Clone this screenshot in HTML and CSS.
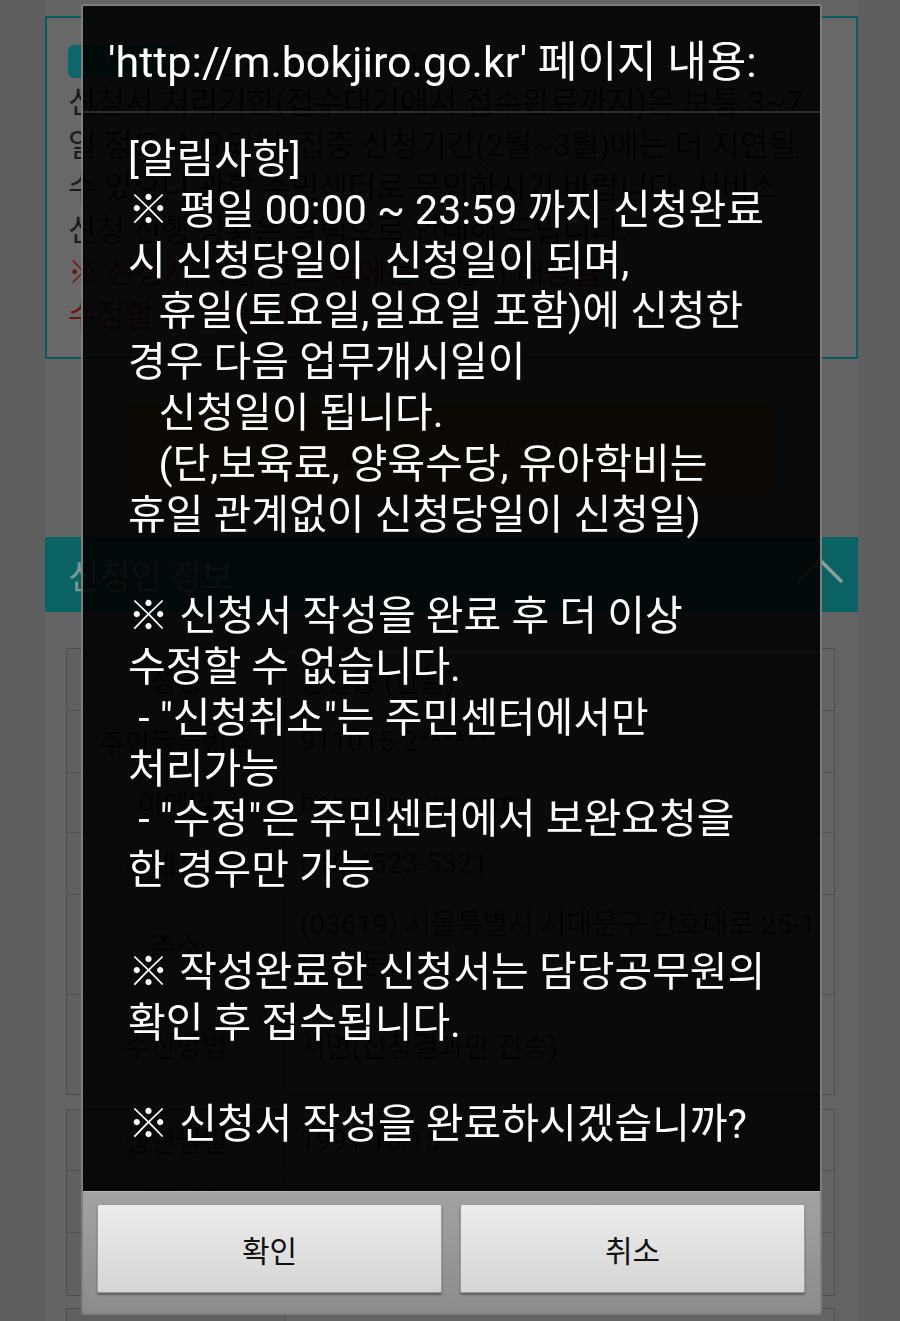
FILE: index.html
```html
<!DOCTYPE html>
<html lang="ko">
<head>
<meta charset="utf-8">
<title>복지로 신청서 작성</title>
<link rel="stylesheet" href="styles.css">
</head>
<body>
<div class="page">
  <section class="notice">
    <div class="notice-head"><span class="badge">안내</span><span class="notice-title">신청서 처리기한 안내</span></div>
    <p class="notice-text">신청서 처리기한(접수대기에서 접수완료까지)은 보통 3~7<br>일 정도 소요되며, 집중 신청기간(2월~3월)에는 더 지연될<br>수 있으니 관할 주민센터로 문의하시기 바랍니다. 서비스<br>신청 진행 상황은 알림으로 안내해 드립니다.</p>
    <p class="notice-warn">※ 신청서 작성 완료 후에는 신청서 내용을<br>수정할 수 없습니다.</p>
  </section>

  <button class="submit" type="button">신청서 작성 완료</button>

  <div class="section-bar">
    <span class="section-title">신청인 정보</span>
    <svg class="chevron" width="50" height="30" viewBox="0 0 50 30"><polyline points="4,25 25,4 46,25" fill="none" stroke="#8e9c9c" stroke-width="3.5" stroke-linecap="round" stroke-linejoin="round"/></svg>
  </div>

  <div class="info">
    <div class="row h62"><div class="label">성명</div><div class="value">홍길동 (한글)</div></div>
    <div class="row h62"><div class="label">주민등록번호</div><div class="value">911015-2******</div></div>
    <div class="row h60"><div class="label">이메일</div><div class="value">hong@naver.com</div></div>
    <div class="row h62"><div class="label">휴대전화</div><div class="value">010-4523-5321</div></div>
    <div class="row h100"><div class="label">주소</div><div class="value multi">(03619) 서울특별시 서대문구 간호대로 25-1<br>(홍은동)</div></div>
    <div class="row h99"><div class="label">수신방법</div><div class="value">서면(신청결과만 전송)</div></div>
  </div>

  <div class="info second">
    <div class="row h61"><div class="label">생년월일</div><div class="value">1991.10.15</div></div>
    <div class="row h62"><div class="label">전화번호</div><div class="value">02-523-5321</div></div>
    <div class="row h62"><div class="label">관계</div><div class="value">본인</div></div>
  </div>
  <div class="info third">
    <div class="row h62"><div class="label"></div><div class="value"></div></div>
  </div>
</div>

<div class="dialog" role="alertdialog">
  <div class="dlg-title">'http://m.bokjiro.go.kr' 페이지 내용:</div>
  <div class="dlg-msg">[알림사항]
※ 평일 00:00 ~ 23:59 까지 신청완료
시 신청당일이  신청일이 되며,
   휴일(토요일,일요일 포함)에 신청한
경우 다음 업무개시일이
   신청일이 됩니다.
   (단,보육료, 양육수당, 유아학비는
휴일 관계없이 신청당일이 신청일)

※ 신청서 작성을 완료 후 더 이상
수정할 수 없습니다.
 - "신청취소"는 주민센터에서만
처리가능
 - "수정"은 주민센터에서 보완요청을
한 경우만 가능

※ 작성완료한 신청서는 담당공무원의
확인 후 접수됩니다.

※ 신청서 작성을 완료하시겠습니까?</div>
  <div class="dlg-bar">
    <button class="dlg-btn" type="button">확인</button>
    <button class="dlg-btn" type="button">취소</button>
  </div>
</div>
</body>
</html>
```

FILE: styles.css
```css
html, body {
  margin: 0;
  padding: 0;
}
body {
  width: 900px;
  height: 1321px;
  overflow: hidden;
  background: #5e5e5e;
  font-family: Roboto, "Noto Sans CJK KR", sans-serif;
}

/* dimmed page underneath */
.page {
  margin-left: 45px;
  width: 813px;
  min-height: 1321px;
  box-sizing: border-box;
  padding-top: 16px;
  background: #646464;
}
.notice {
  height: 343px;
  box-sizing: border-box;
  border: 2px solid #0b5b5e;
  background: #686868;
  padding: 27px 18px 0 21px;
  overflow: hidden;
}
.notice-head {
  display: flex;
  align-items: center;
  height: 33px;
}
.badge {
  width: 110px;
  height: 33px;
  border-radius: 6px 0 0 6px;
  background: #0d6669;
  color: #4a7c7e;
  font-size: 20px;
  line-height: 33px;
  text-align: center;
}
.notice-title {
  margin-left: 12px;
  font-size: 28px;
  color: #1e1e1e;
}
.notice-text,
.notice-warn {
  margin: 4px 0 0;
  font-size: 31px;
  line-height: 42.5px;
  color: #1c1c1c;
  white-space: nowrap;
}
.notice-warn {
  margin-top: 0;
  color: #6e1212;
}
.submit {
  display: block;
  margin: 44px 0 0 83px;
  width: 644px;
  height: 94px;
  border: none;
  background: #7a5524;
  color: #5e4a30;
  font: 32px Roboto, "Noto Sans CJK KR", sans-serif;
}
.section-bar {
  margin-top: 40px;
  height: 75px;
  background: #0a6265;
  display: flex;
  align-items: center;
  justify-content: space-between;
  padding: 0 13px 0 23px;
}
.section-title {
  font-size: 34px;
  color: #7d9898;
}
.chevron {
  display: block;
  margin-top: -8px;
}
.info {
  margin: 36px 0 0 21px;
  width: 769px;
  border: 1px solid #4e4e4e;
  box-sizing: border-box;
}
.info.second {
  margin-top: 14px;
}
.info.third {
  margin-top: 12px;
}
.row {
  display: grid;
  grid-template-columns: 219px 1fr;
  border-bottom: 1px solid #525252;
  box-sizing: border-box;
}
.row:last-child {
  border-bottom: none;
}
.h60 { height: 60px; }
.h61 { height: 61px; }
.h62 { height: 62px; }
.h99 { height: 99px; }
.h100 { height: 100px; }
.label {
  border-right: 1px solid #525252;
  background: #606060;
  color: #262626;
  font-size: 28px;
  display: flex;
  align-items: center;
  justify-content: center;
}
.value {
  padding-left: 14px;
  color: #262626;
  font-size: 28px;
  display: flex;
  align-items: center;
  white-space: nowrap;
  overflow: hidden;
}
.value.multi {
  line-height: 40px;
}

/* alert dialog */
.dialog {
  position: fixed;
  left: 81px;
  top: 4px;
  width: 741px;
  height: 1311px;
  box-sizing: border-box;
  border: 2px solid #7e7e7e;
  border-radius: 3px;
  background: rgba(0, 0, 0, 0.9);
  display: flex;
  flex-direction: column;
  overflow: hidden;
}
.dlg-title {
  height: 107px;
  box-sizing: border-box;
  padding: 0 0 2px 25px;
  display: flex;
  align-items: center;
  border-bottom: 2px solid #2c2c2c;
  color: #ffffff;
  font-size: 43px;
  white-space: nowrap;
}
.dlg-msg {
  flex: 1;
  padding: 21px 10px 0 45px;
  color: #ffffff;
  font-size: 41px;
  line-height: 50.8px;
  white-space: pre;
  overflow: hidden;
}
.dlg-bar {
  height: 122px;
  box-sizing: border-box;
  padding: 12px 15px 21px 14px;
  display: flex;
  gap: 18px;
  background: linear-gradient(#a2a2a2, #8c8c8c);
  border-top: 1px solid #b4b4b4;
}
.dlg-btn {
  flex: 1;
  height: 89px;
  border: 1px solid #9a9a9a;
  border-radius: 2px;
  background: linear-gradient(#ececec, #d5d5d5);
  box-shadow: 0 2px 2px rgba(0, 0, 0, 0.35);
  color: #111111;
  font: 30px Roboto, "Noto Sans CJK KR", sans-serif;
}
```
